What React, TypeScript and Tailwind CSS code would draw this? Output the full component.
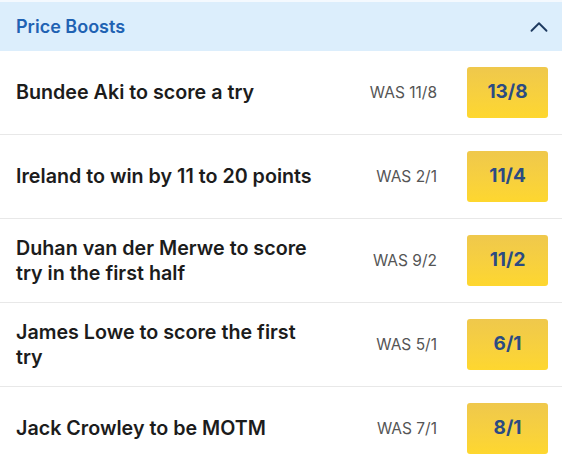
import { ChevronUp } from "lucide-react";

type Boost = { label: string; was: string; now: string };

const boosts: Boost[] = [
  { label: "Bundee Aki to score a try", was: "11/8", now: "13/8" },
  { label: "Ireland to win by 11 to 20 points", was: "2/1", now: "11/4" },
  { label: "Duhan van der Merwe to score try in the first half", was: "9/2", now: "11/2" },
  { label: "James Lowe to score the first try", was: "5/1", now: "6/1" },
  { label: "Jack Crowley to be MOTM", was: "7/1", now: "8/1" },
];

export default function App() {
  return (
    <div className="w-[562px] h-[465px] overflow-hidden bg-white pt-[2px] bg-gradient-to-b from-[#f4f9fe] to-white" style={{ fontFamily: "Inter, 'Noto Sans', sans-serif" }}>
      {/* Header */}
      <div className="flex h-[49px] items-center justify-between bg-[#dceefc] pl-4 pr-[8px]">
        <span className="text-[18px] font-semibold text-[#1f62b3]">Price Boosts</span>
        <ChevronUp size={30} strokeWidth={1.5} className="text-[#1e3a60]" />
      </div>

      {/* Rows */}
      <div className="bg-white">
        {boosts.map((b) => (
          <div key={b.label} className="flex h-[84px] items-center border-b border-[#e8e8e8] pl-4 pr-[14px]">
            <div className="flex-1 pr-[24px] text-[19.7px] font-semibold leading-[25px] text-[#1c1c1c]">{b.label}</div>
            <div className="w-[100px] text-right text-[15.5px] text-[#555555]">WAS {b.was}</div>
            <button className="ml-[30px] flex h-[51px] w-[81px] items-center justify-center rounded-[3px] bg-gradient-to-b from-[#efc84c] to-[#fed72e] text-[19px] font-bold text-[#2b4b82]">
              {b.now}
            </button>
          </div>
        ))}
      </div>
    </div>
  );
}
